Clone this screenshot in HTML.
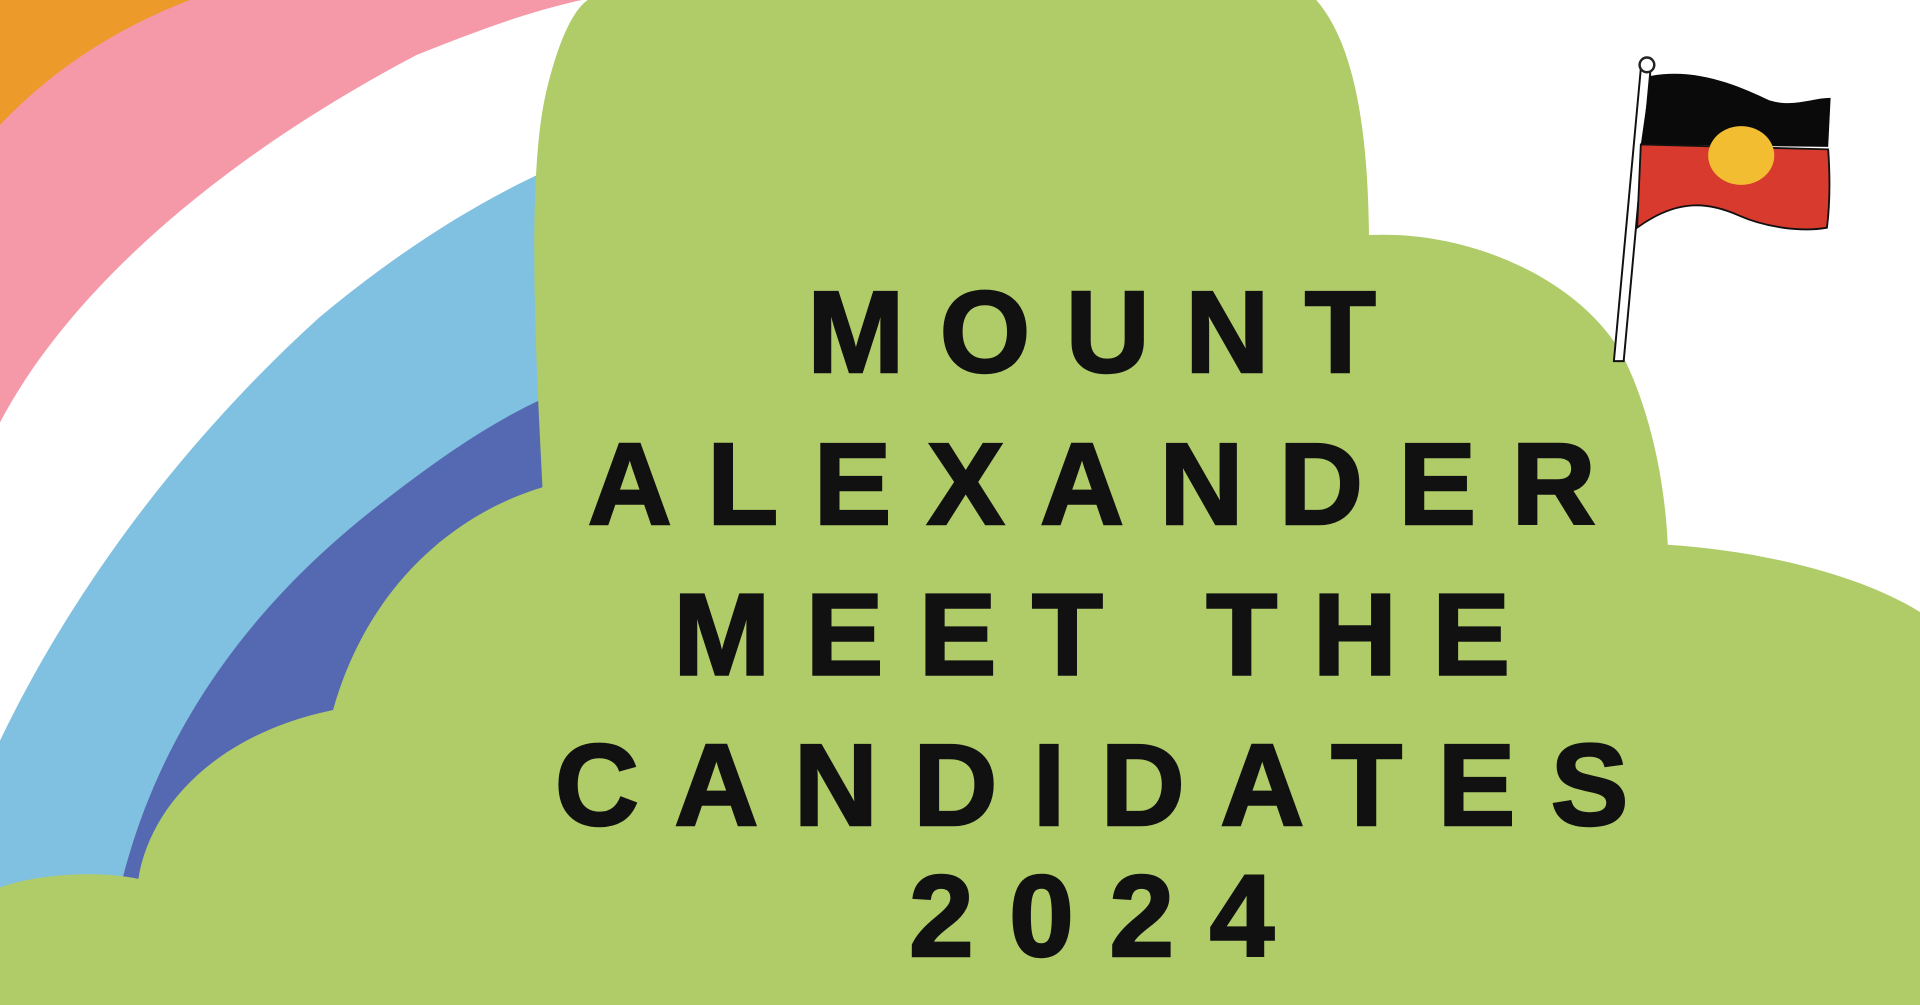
<!DOCTYPE html>
<html><head><meta charset="utf-8"><style>
html,body{margin:0;padding:0;background:#fff;overflow:hidden}
svg{display:block}
</style></head><body>
<svg width="1920" height="1005" viewBox="0 0 1568 821" preserveAspectRatio="none" xmlns="http://www.w3.org/2000/svg">
<rect width="1568" height="821" fill="#fff"/>
<rect x="0" y="0" width="300" height="200" fill="#ec9a2a"/>
<path d="M0,102 C40,60 90,25 155,0 L1568,0 L1568,821 L0,821 Z" fill="#f598a8"/>
<path d="M0,345 C50,250 160,140 340,45 C390,25 430,10 475,0 L1568,0 L1568,821 L0,821 Z" fill="#fff"/>
<path d="M0,605 C60,480 150,360 260,260 C320,210 380,170 445,140 L445,821 L0,821 Z" fill="#80c0e0"/>
<path d="M100,718 C130,600 200,500 300,420 C350,380 400,345 445,325 L445,821 L100,821 Z" fill="#5568b2"/>
<path d="M0,725 C30,714 80,711 113,718 C122,660 175,600 272,580 C300,480 370,420 443,398 C438,300 430,150 445,80 C455,35 468,8 480,0 L1075,0 C1105,35 1117,100 1118,192 C1200,188 1290,228 1325,290 C1350,340 1360,400 1362,445 C1440,450 1520,470 1568,500 L1568,821 L0,821 Z" fill="#afcc68"/>
<path d="M1340,56 L1318,295 L1326,295 L1348,56 Z" fill="#fff" stroke="#111" stroke-width="1.6"/>
<circle cx="1345" cy="53" r="6" fill="#fff" stroke="#222" stroke-width="2"/>
<path d="M1348,62 C1385,55 1420,70 1445,82 C1465,88 1480,80 1495,80 L1493,120 L1340,118 Z" fill="#0a0a0a"/>
<path d="M1340,118 L1493,122 C1495,150 1494,170 1492,186 C1470,190 1440,185 1420,176 C1395,165 1370,162 1337,186 Z" fill="#d83a2e" stroke="#111" stroke-width="1.5"/>
<ellipse cx="1422" cy="127" rx="27" ry="24" fill="#f2bd30"/>
<g font-family="'Liberation Sans',Arial,sans-serif" font-weight="bold" font-size="95" fill="#111" stroke="#111" stroke-width="2" text-anchor="middle" letter-spacing="29">
<text x="906" y="304">MOUNT</text>
<text x="906" y="428">ALEXANDER</text>
<text x="906" y="551">MEET THE</text>
<text x="906" y="674">CANDIDATES</text>
<text x="906" y="781">2024</text>
</g>
</svg>
</body></html>
